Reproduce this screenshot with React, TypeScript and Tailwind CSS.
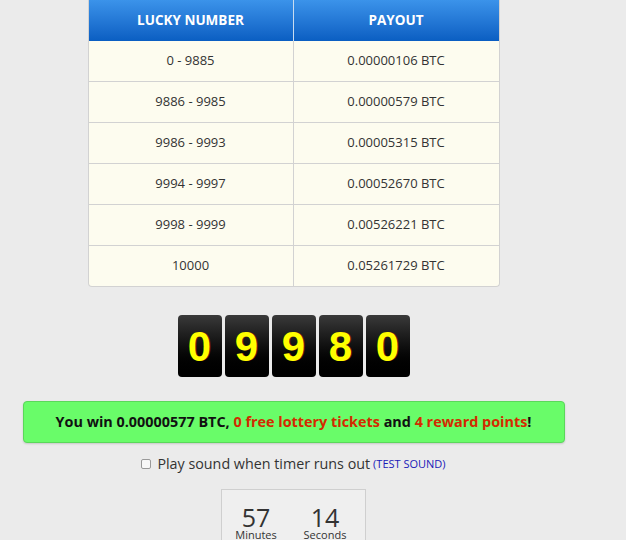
import React from "react";

const rows: [string, string][] = [
  ["0 - 9885", "0.00000106 BTC"],
  ["9886 - 9985", "0.00000579 BTC"],
  ["9986 - 9993", "0.00005315 BTC"],
  ["9994 - 9997", "0.00052670 BTC"],
  ["9998 - 9999", "0.00526221 BTC"],
  ["10000", "0.05261729 BTC"],
];

export default function App() {
  return (
    <div
      className="min-h-[540px] w-full bg-[#ebebeb] text-[#333]"
      style={{ fontFamily: '"Open Sans", "Liberation Sans", sans-serif' }}
    >
      <div className="flex w-[587px] flex-col items-center">
        <div className="w-[412px] overflow-hidden rounded-b-[4px] border border-t-0 border-[#d2d2d2] bg-[#fdfcef]">
          <div className="flex h-[41px] bg-gradient-to-b from-[#3b93ea] to-[#0a5ec2] text-[13.5px] font-bold text-white">
            <div className="flex w-[205px] items-center justify-center border-r border-[#c9dcf0]">
              LUCKY NUMBER
            </div>
            <div className="flex flex-1 items-center justify-center">PAYOUT</div>
          </div>
          {rows.map(([a, b], i) => (
            <div
              key={a}
              className={`flex text-[13px] ${i > 0 ? "h-[41px] border-t border-[#d2d2d2]" : "h-[40px]"}`}
            >
              <div className="flex w-[205px] items-center justify-center border-r border-[#d2d2d2]">
                {a}
              </div>
              <div className="flex flex-1 items-center justify-center">{b}</div>
            </div>
          ))}
        </div>

        <div className="mt-[28px] flex gap-[3px]">
          {["0", "9", "9", "8", "0"].map((d, i) => (
            <div
              key={i}
              className="flex h-[62px] w-[44px] items-center justify-center rounded-[4px] bg-gradient-to-b from-[#3a3a3a] to-[#000] text-[42px] font-bold text-[#ffff00] [text-shadow:1px_0_0_#6b1a00]"
              style={{ fontFamily: '"Liberation Sans", Arial, sans-serif' }}
            >
              {d}
            </div>
          ))}
        </div>

        <div className="mt-[24px] flex h-[42px] w-[542px] items-center justify-center rounded-[4px] border border-[#5ad85a] bg-[#69fc69] text-[14.4px] font-bold text-[#111] shadow-[0_1px_2px_rgba(0,0,0,0.15)]">
          <span>
            You win 0.00000577 BTC, <span className="text-[#d42a00]">0 free lottery tickets</span> and{" "}
            <span className="text-[#d42a00]">4 reward points</span>!
          </span>
        </div>

        <div className="mt-[12px] flex h-[18px] items-center text-[14.3px] text-[#333]">
          <span className="mr-[6px] inline-block h-[10px] w-[10px] rounded-[2px] border border-[#999] bg-[#f8f8f8]" />
          <span>Play sound when timer runs out </span>
          <span className="ml-[3px] text-[11px] text-[#1a1ab8]">(TEST SOUND)</span>
        </div>

        <div className="mt-[16px] flex h-[60px] w-[145px] gap-[9px] border border-[#cfcfcf] bg-[#efefef] pl-[4px] pt-[15px]">
          <div className="flex w-[60px] flex-col items-center">
            <span className="text-[25px] leading-[24px]">57</span>
            <span className="text-[11px] leading-[12px]">Minutes</span>
          </div>
          <div className="flex w-[60px] flex-col items-center">
            <span className="text-[25px] leading-[24px]">14</span>
            <span className="text-[11px] leading-[12px]">Seconds</span>
          </div>
        </div>
      </div>
    </div>
  );
}
